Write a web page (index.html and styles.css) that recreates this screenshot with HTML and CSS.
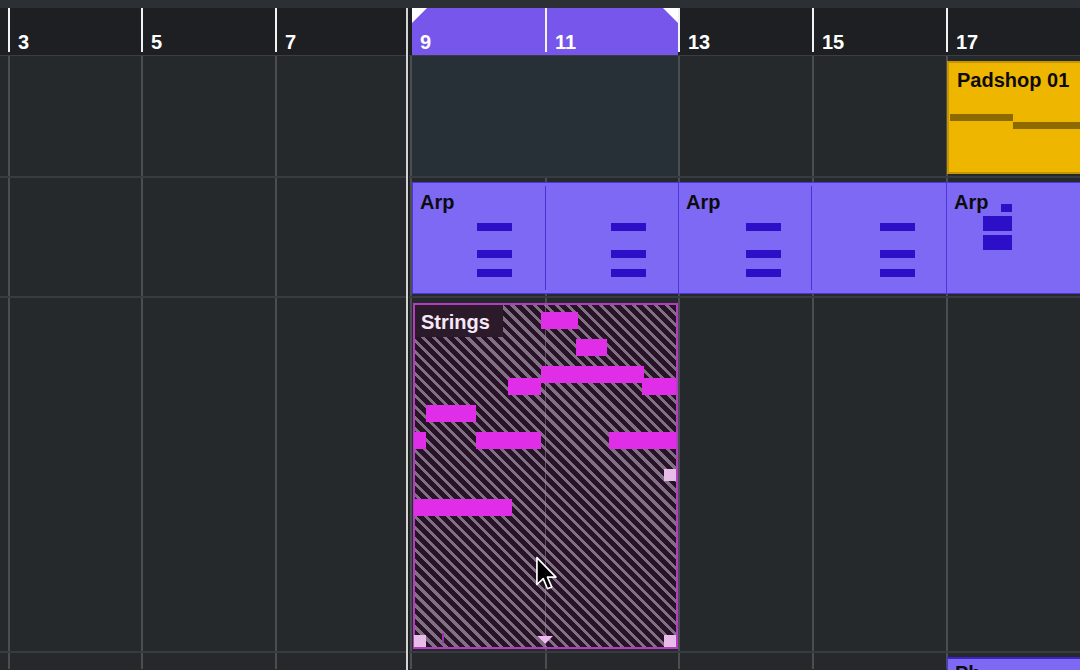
FILE: index.html
```html
<!DOCTYPE html>
<html>
<head>
<meta charset="utf-8">
<link rel="stylesheet" href="styles.css">
</head>
<body>
<div class="app">
  <div class="topstrip"></div>
  <div class="ruler">
    <div class="cycle"><span class="tri tri-l"></span><span class="tri tri-r"></span></div>
    <div class="rcell c0"></div>
    <div class="rcell c1"><span>3</span></div>
    <div class="rcell c2"><span>5</span></div>
    <div class="rcell c3"><span>7</span></div>
    <div class="rcell c4"><span>9</span></div>
    <div class="rcell c5"><span>11</span></div>
    <div class="rcell c6"><span>13</span></div>
    <div class="rcell c7"><span>15</span></div>
    <div class="rcell c8"><span>17</span></div>
  </div>
  <div class="lanes">
    <div class="grid">
      <div class="gcol c0"></div>
      <div class="gcol c1"></div>
      <div class="gcol c2"></div>
      <div class="gcol c3"></div>
      <div class="gcol c4"></div>
      <div class="gcol c5"></div>
      <div class="gcol c6"></div>
      <div class="gcol c7"></div>
      <div class="gcol c8"></div>
    </div>

    <div class="track t1">
      <div class="cycle-tint"></div>
      <div class="part padshop">
        <div class="label">Padshop 01</div>
        <div class="pnote" style="left:1px;top:51px;width:63px"></div>
        <div class="pnote" style="left:64px;top:59px;width:80px"></div>
      </div>
    </div>

    <div class="track t2">
      <div class="part arp a1">
        <div class="label">Arp</div>
        <div class="divider"></div>
        <div class="anote" style="left:64px;top:40px"></div>
        <div class="anote" style="left:64px;top:67px"></div>
        <div class="anote" style="left:64px;top:86px"></div>
        <div class="anote" style="left:198px;top:40px"></div>
        <div class="anote" style="left:198px;top:67px"></div>
        <div class="anote" style="left:198px;top:86px"></div>
      </div>
      <div class="part arp a2">
        <div class="label">Arp</div>
        <div class="divider"></div>
        <div class="anote" style="left:67px;top:40px"></div>
        <div class="anote" style="left:67px;top:67px"></div>
        <div class="anote" style="left:67px;top:86px"></div>
        <div class="anote" style="left:201px;top:40px"></div>
        <div class="anote" style="left:201px;top:67px"></div>
        <div class="anote" style="left:201px;top:86px"></div>
      </div>
      <div class="part arp a3">
        <div class="label">Arp</div>
        <div class="anote" style="left:54px;top:21px;width:11px;height:8px"></div>
        <div class="anote" style="left:36px;top:33px;width:29px;height:15px"></div>
        <div class="anote" style="left:36px;top:52px;width:29px;height:15px"></div>
      </div>
    </div>

    <div class="track t3">
      <div class="part strings">
        <div class="sgrid"></div>
        <div class="snote" style="left:126px;top:7px;width:37px"></div>
        <div class="snote" style="left:161px;top:34px;width:31px"></div>
        <div class="snote" style="left:126px;top:61px;width:103px"></div>
        <div class="snote" style="left:93px;top:73px;width:33px"></div>
        <div class="snote" style="left:227px;top:73px;width:34px"></div>
        <div class="snote" style="left:11px;top:100px;width:50px"></div>
        <div class="snote" style="left:-1px;top:127px;width:12px"></div>
        <div class="snote" style="left:61px;top:127px;width:65px"></div>
        <div class="snote" style="left:194px;top:127px;width:67px"></div>
        <div class="snote" style="left:-1px;top:194px;width:98px"></div>
        <div class="slabel">Strings</div>
        <div class="handle h-bl"></div>
        <div class="handle h-br"></div>
        <div class="handle h-rm"></div>
        <div class="hmark"></div>
        <div class="vol-tri"></div>
      </div>
    </div>

    <div class="track t4">
      <div class="part arp a4">
        <div class="label">Ph</div>
      </div>
    </div>
  </div>

  <div class="playhead"></div>

  <svg class="mouse" width="26" height="38" viewBox="0 0 24 36">
    <path d="M1.5 1.5 L1.5 27 L7.5 21.5 L11.5 31 L15.5 29.3 L11.5 20 L19.5 20 Z" fill="#000" stroke="#fff" stroke-width="1.6" stroke-linejoin="round"/>
  </svg>
</div>
</body>
</html>
```

FILE: styles.css
```css
* { box-sizing: border-box; }
html, body { margin: 0; padding: 0; }
body {
  background: #25292c;
  font-family: "Liberation Sans", Arial, sans-serif;
  overflow: hidden;
}
.app {
  position: relative;
  width: 1080px;
  height: 670px;
  overflow: hidden;
  background: #25292c;
}
.topstrip {
  height: 8px;
  background: #2c3034;
}
.ruler {
  position: relative;
  height: 48px;
  display: flex;
  background: #1e1f22;
  border-bottom: 1px solid #3a3e42;
}
.cycle {
  position: absolute;
  left: 412px;
  top: 0;
  width: 266px;
  height: 47px;
  background: #7656eb;
}
.tri {
  position: absolute;
  top: 0;
  width: 0;
  height: 0;
}
.tri-l {
  left: 0;
  border-top: 15px solid #ffffff;
  border-right: 15px solid transparent;
}
.tri-r {
  right: 0;
  border-top: 15px solid #ffffff;
  border-left: 15px solid transparent;
}
.rcell {
  position: relative;
  z-index: 1;
  height: 44px;
  border-left: 2px solid #f2f2f2;
  display: flex;
  align-items: flex-end;
  padding-left: 8px;
  color: #ffffff;
  font-weight: bold;
  font-size: 20px;
  line-height: 20px;
}
.rcell span { margin-bottom: 0; }
.c0 { width: 8px; border-left: none; padding: 0; }
.c1 { width: 133px; }
.c2 { width: 134px; }
.c3 { width: 135px; }
.c4 { width: 135px; border-left-color: transparent; }
.c5 { width: 133px; }
.c6 { width: 134px; }
.c7 { width: 134px; }
.c8 { width: 134px; }

.lanes {
  position: relative;
  height: 613px;
}
.grid {
  position: absolute;
  inset: 0;
  display: flex;
}
.gcol {
  height: 100%;
  border-left: 2px solid #4a4e52;
}
.gcol.c0 { border-left: none; }

.track {
  position: relative;
  border-bottom: 2px solid #383c40;
}
.t1 { height: 122px; }
.t2 { height: 120px; }
.t3 { height: 355px; }
.t4 { height: 16px; border-bottom: none; }

.cycle-tint {
  position: absolute;
  left: 412px;
  top: 0;
  width: 266px;
  height: 120px;
  background: #272f37;
}
.part {
  position: absolute;
}
.label {
  font-weight: bold;
  font-size: 20px;
  line-height: 22px;
  color: #0c0c10;
  padding: 8px 0 0 7px;
  position: relative;
  z-index: 1;
  white-space: nowrap;
}
.padshop {
  left: 947px;
  top: 5px;
  width: 140px;
  height: 113px;
  background: #efb600;
  border: 2px solid #c79500;
}
.padshop .label { padding: 6px 0 0 8px; font-size: 20px; }
.pnote {
  position: absolute;
  height: 7px;
  background: #8c6a00;
}
.arp {
  top: 4px;
  height: 112px;
  background: #7e69f4;
  border: 1px solid #4f35dc;
}
.a1 { left: 412px; width: 267px; }
.a2 { left: 678px; width: 269px; }
.a3 { left: 946px; width: 140px; }
.a4 { left: 947px; top: 4px; width: 140px; height: 60px; border-top: 2px solid #3d22c4; }
.a4 .label { padding-top: 3px; }
.divider {
  position: absolute;
  left: 132px;
  top: 3px;
  bottom: 3px;
  width: 1px;
  background: #4a2fd6;
}
.anote {
  position: absolute;
  width: 35px;
  height: 8px;
  background: #2c0fc6;
}
.strings {
  left: 413px;
  top: 5px;
  width: 265px;
  height: 346px;
  border: 2px solid #b43cc0;
  background-color: #271226;
  background-image: repeating-linear-gradient(45deg,
    #271226 0px, #271226 4.8px,
    #807086 4.8px, #807086 7.8px);
}
.sgrid {
  position: absolute;
  left: 130px;
  top: 0;
  bottom: 0;
  width: 1px;
  background: rgba(170, 150, 175, 0.45);
}
.snote {
  position: absolute;
  height: 17px;
  background: #e02ee8;
}
.slabel {
  position: absolute;
  left: 0;
  top: 0;
  width: 88px;
  height: 32px;
  background: #2b1a2a;
  color: #f6e8f6;
  font-weight: bold;
  font-size: 20px;
  line-height: 22px;
  padding: 6px 0 0 6px;
}
.handle {
  position: absolute;
  width: 12px;
  height: 12px;
  background: #e8bce8;
}
.h-bl { left: -1px; top: 330px; }
.h-br { left: 249px; top: 330px; }
.h-rm { left: 249px; top: 164px; }
.hmark {
  position: absolute;
  left: 27px;
  top: 328px;
  width: 2px;
  height: 10px;
  background: #a02cb4;
}
.vol-tri {
  position: absolute;
  left: 122px;
  top: 331px;
  width: 0;
  height: 0;
  border-left: 8px solid transparent;
  border-right: 8px solid transparent;
  border-top: 8px solid #f0b8f0;
}
.playhead {
  position: absolute;
  left: 406px;
  top: 8px;
  width: 3px;
  height: 662px;
  background: #d4d4d4;
  border-right: 1px solid #1a1c1e;
}
.mouse {
  position: absolute;
  left: 535px;
  top: 556px;
}
```
